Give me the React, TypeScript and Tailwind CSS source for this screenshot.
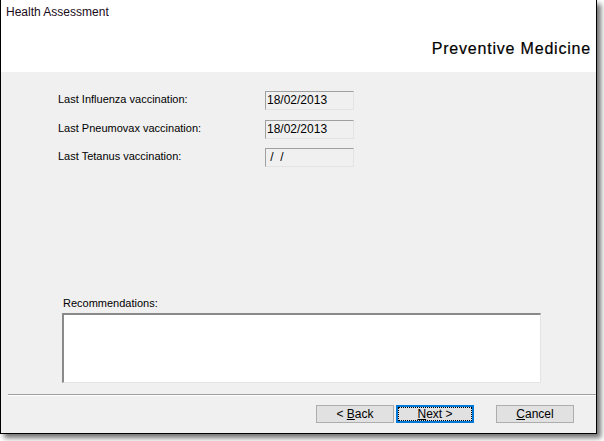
const font = { fontFamily: '"Liberation Sans", Arial, sans-serif' };

const rows = [
  { label: 'Last Influenza vaccination:', value: '18/02/2013' },
  { label: 'Last Pneumovax vaccination:', value: '18/02/2013' },
  { label: 'Last Tetanus vaccination:', value: ' /  /' },
];

function Field({ value }: { value: string }) {
  return (
    <div className="w-[89px] h-[19px] bg-[#f0f0f0] border border-t-[#a0a0a0] border-l-[#a0a0a0] border-r-[#e3e3e3] border-b-[#e3e3e3] pl-[1px] text-[12px] leading-[16px] text-black whitespace-pre">
      {value}
    </div>
  );
}

function Button({ children, focused }: { children: React.ReactNode; focused?: boolean }) {
  return (
    <div
      className={
        focused
          ? 'w-[78px] h-[18px] bg-[#e1e1e1] border-2 border-[#0078d7] flex'
          : 'w-[78px] h-[18px] bg-[#e1e1e1] border border-[#adadad] flex'
      }
    >
      <div
        className={
          focused
            ? 'flex-1 flex items-center justify-center border border-dotted border-black text-[12px] text-black'
            : 'flex-1 flex items-center justify-center text-[12px] text-black'
        }
      >
        {children}
      </div>
    </div>
  );
}

export default function App() {
  return (
    <div className="w-[604px] h-[441px] bg-white" style={font}>
      <div className="w-[597px] h-[434px] border-l border-r border-b border-black flex flex-col shadow-[4px_4px_5px_rgba(0,0,0,0.55)]">
        <div className="h-[72px] bg-white flex flex-col">
          <div className="pl-[5px] pt-[5px] text-[12px] leading-[14px] text-[#1a0a1a]">Health Assessment</div>
          <div className="mt-[21px] pr-[5px] text-right text-[16px] leading-[18px] tracking-[0.8px] text-black [-webkit-text-stroke:0.2px_black]">
            Preventive Medicine
          </div>
        </div>
        <div className="flex-1 bg-[#f0f0f0] flex flex-col">
          <div className="pt-[19px] pl-[57px] flex flex-col gap-[9.5px]">
            {rows.map((r) => (
              <div key={r.label} className="flex items-start h-[19px]">
                <div className="w-[207px] text-[11px] leading-[14px] text-black pt-[1px]">{r.label}</div>
                <Field value={r.value} />
              </div>
            ))}
          </div>
          <div className="mt-[129px] pl-[62px] text-[11px] leading-[14px] text-black">Recommendations:</div>
          <div className="mt-[3px] ml-[61px] w-[479px] h-[70px] bg-white border-t-2 border-l-2 border-t-[#8a8a8a] border-l-[#8a8a8a] border-r border-b border-r-[#e3e3e3] border-b-[#e3e3e3]" />
          <div className="mt-[11px] ml-[7px] h-[2px] border-t border-[#a0a0a0] border-b border-b-white" />
          <div className="mt-[9px] flex justify-end pr-[22px]">
            <div className="flex gap-[2px]">
              <Button>
                &lt;&nbsp;<span className="underline">B</span>ack
              </Button>
              <Button focused>
                <span className="underline">N</span>ext &gt;
              </Button>
            </div>
            <div className="ml-[22px]">
              <Button>
                <span className="underline">C</span>ancel
              </Button>
            </div>
          </div>
        </div>
      </div>
    </div>
  );
}
